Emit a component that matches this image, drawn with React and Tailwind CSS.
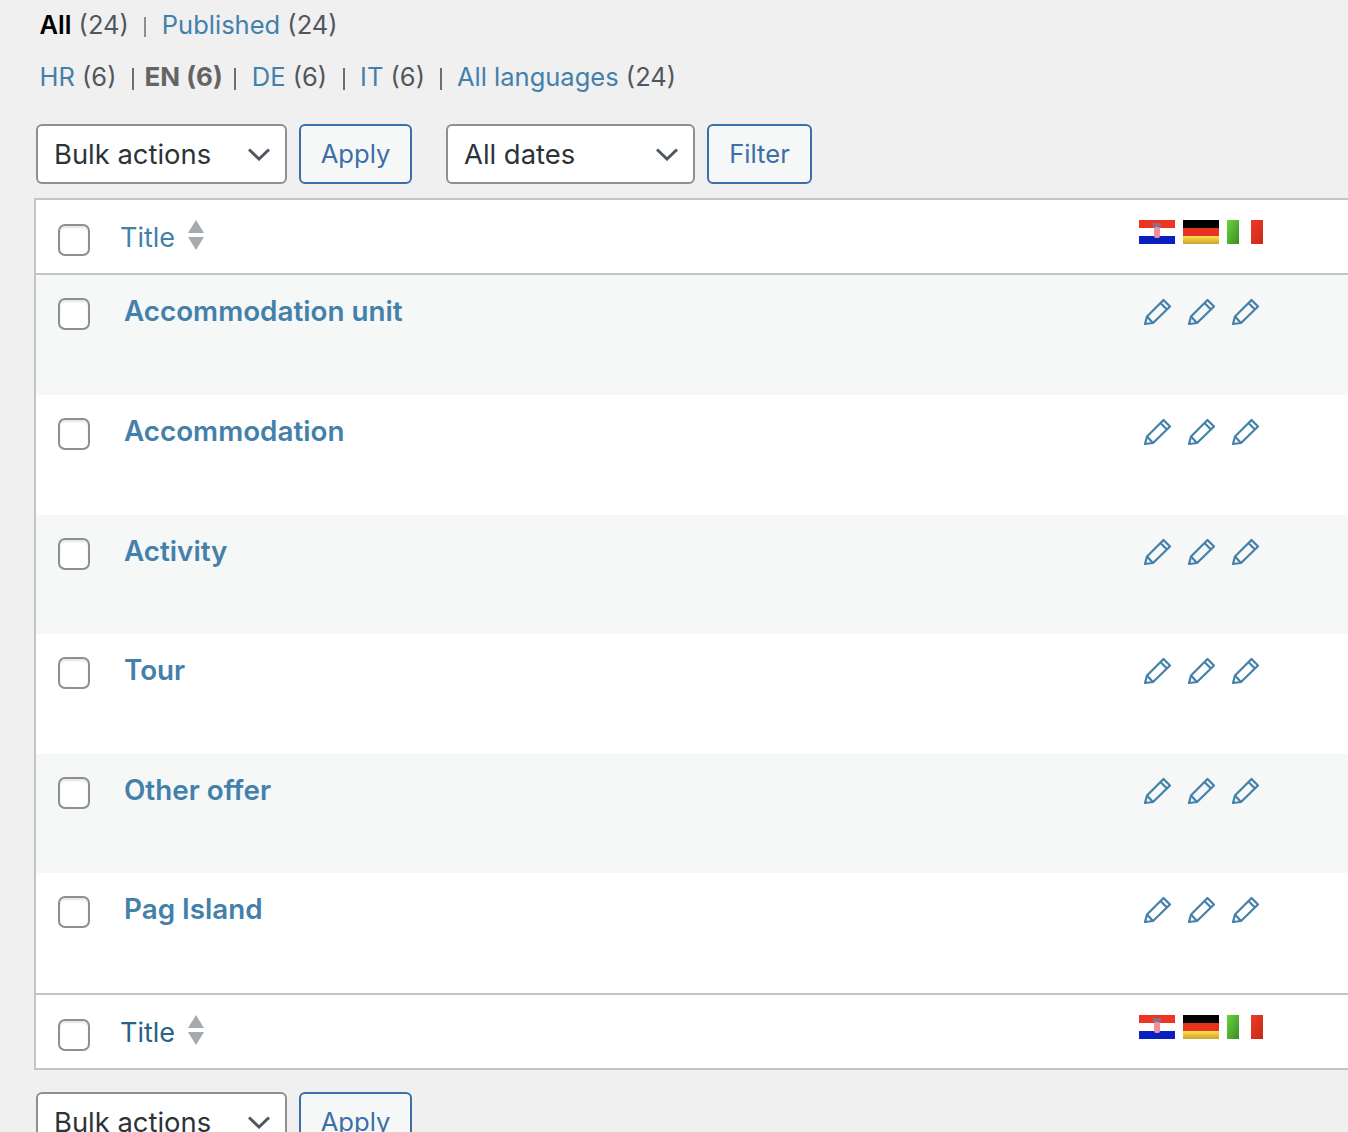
const rows = [
  { title: 'Accommodation unit', height: 'h-[120px]', bg: 'bg-[#f6f7f7]' },
  { title: 'Accommodation', height: 'h-[120px]', bg: 'bg-white' },
  { title: 'Activity', height: 'h-[119px]', bg: 'bg-[#f6f7f7]' },
  { title: 'Tour', height: 'h-[120px]', bg: 'bg-white' },
  { title: 'Other offer', height: 'h-[119px]', bg: 'bg-[#f6f7f7]' },
  { title: 'Pag Island', height: 'h-[120px]', bg: 'bg-white' },
];

const Count = ({ children }) => <span className="text-[#50575e]">{children}</span>;

// separators in the reference are shorter than Inter's bar, so they are drawn small
const Sep = ({ className = '' }) => (
  <span className={`block w-[2px] shrink-0 ${className}`} />
);

const Checkbox = () => (
  <span className="block w-8 h-8 rounded-[7px] border-2 border-[#8c8f94] bg-white shadow-[inset_0_2px_2px_rgba(0,0,0,0.1)]" />
);

const SortArrows = () => (
  <svg width="16" height="30" viewBox="0 0 16 30" className="ml-[13px]">
    <path d="M8 0 L16 13 L0 13 Z" fill="#a7aaad" />
    <path d="M0 17 L16 17 L8 30 Z" fill="#a7aaad" />
  </svg>
);

const Chevron = () => (
  <svg width="22" height="13" viewBox="0 0 22 13" fill="none" stroke="#50575e" strokeWidth="3" className="block mt-[1px]">
    <path d="M1 1.5 L11 11 L21 1.5" />
  </svg>
);

const Croatia = () => (
  <svg width="36" height="24" viewBox="0 0 36 24" className="block blur-[0.5px]">
    <rect width="36" height="8" fill="#ee3524" />
    <rect y="8" width="36" height="8" fill="#ffffff" />
    <rect y="16" width="36" height="8" fill="#0a1fbf" />
    <rect x="14" y="3" width="8" height="4" fill="#8a6f8a" />
    <rect x="15" y="7" width="6" height="11" rx="2" fill="#f0909a" />
  </svg>
);

const Germany = () => (
  <svg width="36" height="24" viewBox="0 0 36 24" className="block blur-[0.5px]">
    <defs>
      <linearGradient id="de-yellow" x1="0" y1="0" x2="0" y2="1">
        <stop offset="0" stopColor="#ffe24a" />
        <stop offset="1" stopColor="#c9a332" />
      </linearGradient>
    </defs>
    <rect width="36" height="8" fill="#000000" />
    <rect y="8" width="36" height="8" fill="#e8321f" />
    <rect y="16" width="36" height="8" fill="url(#de-yellow)" />
  </svg>
);

const Italy = () => (
  <svg width="36" height="24" viewBox="0 0 36 24" className="block blur-[0.5px]">
    <defs>
      <linearGradient id="it-green" x1="0" y1="0" x2="1" y2="1">
        <stop offset="0" stopColor="#66d63c" />
        <stop offset="1" stopColor="#3c8a28" />
      </linearGradient>
      <linearGradient id="it-red" x1="0" y1="0" x2="1" y2="1">
        <stop offset="0" stopColor="#f23a26" />
        <stop offset="1" stopColor="#c42a1c" />
      </linearGradient>
    </defs>
    <rect width="12" height="24" fill="url(#it-green)" />
    <rect x="12" width="12" height="24" fill="#ffffff" />
    <rect x="24" width="12" height="24" fill="url(#it-red)" />
  </svg>
);

const Flags = () => (
  <div className="flex gap-2">
    <Croatia />
    <Germany />
    <Italy />
  </div>
);

const Pencil = () => (
  <svg width="28" height="28" viewBox="0 0 28 28" fill="none" stroke="#4380aa" strokeWidth="2.2" strokeLinejoin="round" className="block">
    <path d="M2 26 L4 18.5 L20.5 2 L27 8.5 L10 25 Z" />
    <path d="M17.5 5 L24 11.5" />
    <path d="M4 18.5 L10 25" />
  </svg>
);

const Select = ({ label, width }) => (
  <div className={`${width} h-[60px] shrink-0 flex items-center justify-between pl-[16px] pr-[15px] bg-white border-2 border-[#8c8f94] rounded-[6px] text-[#2c3338] text-[27.4px]`}>
    <span className="mt-[2px]">{label}</span>
    <Chevron />
  </div>
);

const Button = ({ label, width }) => (
  <div className={`${width} h-[60px] shrink-0 flex items-center justify-center bg-[#f6f7f7] border-2 border-[#3a6fa8] rounded-[6px] text-[#3a6fa8] text-[25.6px]`}>
    <span className="mt-[1px]">{label}</span>
  </div>
);

const HeaderRow = ({ linkColor }) => (
  <div className="h-[73px] flex bg-white">
    <div className="w-[85px] pl-[22px] pt-[24px] shrink-0">
      <Checkbox />
    </div>
    <div className="w-[1018px] shrink-0 flex items-start pt-[20px] -ml-[1px]">
      <span className={`text-[27px] leading-[36px] ${linkColor}`}>Title</span>
      <SortArrows />
    </div>
    <div className="pt-[20px] ml-[1px]">
      <Flags />
    </div>
  </div>
);

export default function App() {
  return (
    <div className="h-[1132px] w-[1348px] overflow-hidden bg-[#f0f0f1] text-[25.5px] font-['Inter','Liberation_Sans',sans-serif]">
      <div className="h-[198px] pl-[36px]">
        <div className="h-[52px] pt-[7px] pl-[3.5px] flex leading-[36px]">
          <span className="font-semibold text-black">All</span>
          <Count>&nbsp;(24)</Count>
          <Sep className="h-[20px] mt-[10px] bg-[#8a8f94] ml-[15px] mr-[16px]" />
          <span className="text-[#4380aa]">Published</span>
          <Count>&nbsp;(24)</Count>
        </div>
        <div className="h-[72px] pt-[7px] pl-[3.5px] flex leading-[36px]">
          <span className="text-[#4380aa]">HR</span>
          <Count>&nbsp;(6)</Count>
          <Sep className="h-[22px] mt-[9px] bg-[#6b6f73] ml-[16px] mr-[10px]" />
          <span className="font-bold text-[#646464] text-[26px]">EN (6)</span>
          <Sep className="h-[22px] mt-[9px] bg-[#6b6f73] ml-[11px] mr-[16px]" />
          <span className="text-[#4380aa]">DE</span>
          <Count>&nbsp;(6)</Count>
          <Sep className="h-[22px] mt-[9px] bg-[#6b6f73] ml-[16px] mr-[15px]" />
          <span className="text-[#4380aa]">IT</span>
          <Count>&nbsp;(6)</Count>
          <Sep className="h-[22px] mt-[9px] bg-[#6b6f73] ml-[15px] mr-[15px]" />
          <span className="text-[#4380aa]">All languages</span>
          <Count>&nbsp;(24)</Count>
        </div>
        <div className="flex">
          <Select label="Bulk actions" width="w-[251px]" />
          <div className="w-[12px] shrink-0" />
          <Button label="Apply" width="w-[113px]" />
          <div className="w-[34px] shrink-0" />
          <Select label="All dates" width="w-[249px]" />
          <div className="w-[12px] shrink-0" />
          <Button label="Filter" width="w-[105px]" />
        </div>
      </div>

      <div className="ml-[34px] w-[1400px] border-2 border-[#c3c4c7] bg-white">
        <HeaderRow linkColor="text-[#4380aa]" />
        <div className="border-y-2 border-[#c3c4c7]">
          {rows.map((row) => (
            <div key={row.title} className={`${row.height} ${row.bg} flex`}>
              <div className="w-[85px] pl-[22px] pt-[23px] shrink-0">
                <Checkbox />
              </div>
              <div className="w-[1022px] shrink-0 pt-[17px] pl-[3px] text-[27.8px] leading-[38px] font-semibold text-[#4380aa]">
                {row.title}
              </div>
              <div className="pt-[23px] flex gap-4">
                <Pencil />
                <Pencil />
                <Pencil />
              </div>
            </div>
          ))}
        </div>
        <HeaderRow linkColor="text-[#2b6283]" />
      </div>

      <div className="flex pl-[36px] pt-[22px]">
        <Select label="Bulk actions" width="w-[251px]" />
        <div className="w-[12px] shrink-0" />
        <Button label="Apply" width="w-[113px]" />
      </div>
    </div>
  );
}
